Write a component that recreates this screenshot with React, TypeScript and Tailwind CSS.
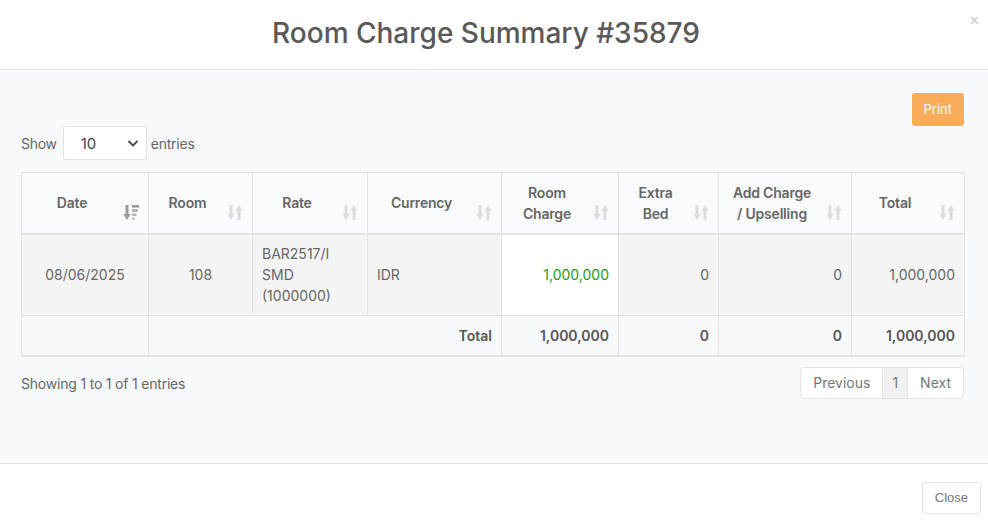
import React from "react";

const SortIcon = ({ active = false }: { active?: boolean }) =>
  active ? (
    <svg width="16" height="17" viewBox="0 0 16 17" className="text-[#9a9a9a]">
      <path d="M4 1v10" stroke="currentColor" strokeWidth="3" />
      <path d="M0.3 10L4 16L7.7 10Z" fill="currentColor" />
      <rect x="9" y="1" width="7" height="2.6" fill="currentColor" />
      <rect x="9" y="5.2" width="5.8" height="2.6" fill="currentColor" opacity="0.85" />
      <rect x="9" y="9.4" width="4.4" height="2.6" fill="currentColor" opacity="0.7" />
      <rect x="9" y="13.6" width="3" height="2.2" fill="currentColor" opacity="0.55" />
    </svg>
  ) : (
    <svg width="16" height="17" viewBox="0 0 16 17" className="text-[#dcdcdc]">
      <path d="M4 1v10" stroke="currentColor" strokeWidth="3" />
      <path d="M0.3 10L4 16L7.7 10Z" fill="currentColor" />
      <path d="M12 16V6" stroke="currentColor" strokeWidth="3" />
      <path d="M8.3 7L12 1L15.7 7Z" fill="currentColor" />
    </svg>
  );

const headers = [
  { label: ["Date"], active: true },
  { label: ["Room"] },
  { label: ["Rate"] },
  { label: ["Currency"] },
  { label: ["Room", "Charge"] },
  { label: ["Extra", "Bed"] },
  { label: ["Add Charge", "/ Upselling"] },
  { label: ["Total"] },
];

const widths = [127, 104, 115, 134, 117, 100, 133, 113];

export default function App() {
  return (
    <div
      className="w-[988px] h-[526px] bg-white flex flex-col text-[#666]"
      style={{ fontFamily: "Inter, 'Noto Sans', sans-serif" }}
    >
      {/* header */}
      <div className="relative h-[70px] border-b border-[#e5e5e5] flex items-center justify-center">
        <h1 className="text-[28px] font-medium text-[#595959] mt-[-3px] mr-[16px]">
          Room Charge Summary #35879
        </h1>
        <span
          className="absolute right-[9px] top-[9px] text-[16px] text-[#c8c8c8]"
          style={{ fontFamily: "'Liberation Sans', Arial, sans-serif" }}
        >
          ×
        </span>
      </div>

      {/* body */}
      <div className="h-[394px] bg-[#f8f9fb] border-b border-[#e5e5e5] pl-[21px] pr-[24px] pt-[23px]">
        <div className="flex justify-end">
          <button className="h-[33px] px-[12px] rounded-[3px] bg-[#f9ad5a] text-white text-[13px]">
            Print
          </button>
        </div>
        <div className="flex items-center text-[14px] text-[#666]">
          <span className="tracking-[-0.3px]">Show</span>
          <div className="ml-[6px] mr-[4px] w-[84px] h-[34px] bg-white border border-[#e3e3e3] rounded-[2px] flex items-center justify-between pl-[17px] pr-[6px]">
            <span className="text-[15px] text-[#444] mt-[3px]">10</span>
            <svg width="14" height="14" viewBox="0 0 14 14">
              <path d="M2.5 5l4.5 4.5L11.5 5" fill="none" stroke="#444" strokeWidth="1.8" />
            </svg>
          </div>
          <span className="tracking-[-0.2px]">entries</span>
        </div>

        <table className="mt-[12px] border-collapse table-fixed w-[943px] text-[14px]">
          <colgroup>
            {widths.map((w, i) => (
              <col key={i} style={{ width: w }} />
            ))}
          </colgroup>
          <thead>
            <tr className="h-[61px] bg-[#f9fafb]">
              {headers.map((h, i) => (
                <th
                  key={i}
                  className="relative border border-[#e3e3e3] border-b-2 font-semibold text-[#666] leading-[21px] pr-[30px] pl-[4px] tracking-[-0.2px]"
                >
                  {h.label.map((l) => (
                    <div key={l}>{l}</div>
                  ))}
                  <span className="absolute right-[9px] top-[31px]">
                    <SortIcon active={h.active} />
                  </span>
                </th>
              ))}
            </tr>
          </thead>
          <tbody>
            <tr className="h-[82px] bg-[#f4f4f4] text-[#666] leading-[21px]">
              <td className="border border-[#e3e3e3] text-center">08/06/2025</td>
              <td className="border border-[#e3e3e3] text-center">108</td>
              <td className="border border-[#e3e3e3] px-[9px]">
                <div>BAR2517/I</div>
                <div>SMD</div>
                <div>(1000000)</div>
              </td>
              <td className="border border-[#e3e3e3] px-[9px]">IDR</td>
              <td className="border border-[#e3e3e3] px-[9px] text-right bg-white text-[#1e9a1e]">
                1,000,000
              </td>
              <td className="border border-[#e3e3e3] px-[9px] text-right">0</td>
              <td className="border border-[#e3e3e3] px-[9px] text-right">0</td>
              <td className="border border-[#e3e3e3] px-[9px] text-right">1,000,000</td>
            </tr>
            <tr className="h-[40px] bg-[#f8f9fb] font-semibold text-[#555]">
              <td className="border border-[#e3e3e3] border-b-2"></td>
              <td colSpan={3} className="border border-[#e3e3e3] border-b-2 px-[9px] text-right">
                Total
              </td>
              <td className="border border-[#e3e3e3] border-b-2 px-[9px] text-right">1,000,000</td>
              <td className="border border-[#e3e3e3] border-b-2 px-[9px] text-right">0</td>
              <td className="border border-[#e3e3e3] border-b-2 px-[9px] text-right">0</td>
              <td className="border border-[#e3e3e3] border-b-2 px-[9px] text-right">1,000,000</td>
            </tr>
          </tbody>
        </table>

        <div className="flex items-center justify-between mt-[10px]">
          <span className="text-[14px] text-[#666] tracking-[-0.2px] mt-[2px]">
            Showing 1 to 1 of 1 entries
          </span>
          <div className="flex h-[32px] border border-[#e3e3e3] rounded-[4px] bg-white text-[14px] text-[#777] overflow-hidden">
            <span className="px-[12px] flex items-center border-r border-[#e3e3e3]">Previous</span>
            <span className="px-[9px] flex items-center bg-[#f1f1f1] border-r border-[#e3e3e3]">1</span>
            <span className="px-[12px] flex items-center">Next</span>
          </div>
        </div>
      </div>

      {/* footer */}
      <div className="flex-1 flex justify-end items-start pt-[18px] pr-[7px]">
        <button
          className="h-[32px] px-[12px] border border-[#e3e3e3] rounded-[3px] bg-white text-[13px] text-[#777]"
          style={{ fontFamily: "'Liberation Sans', Arial, sans-serif" }}
        >
          Close
        </button>
      </div>
    </div>
  );
}
